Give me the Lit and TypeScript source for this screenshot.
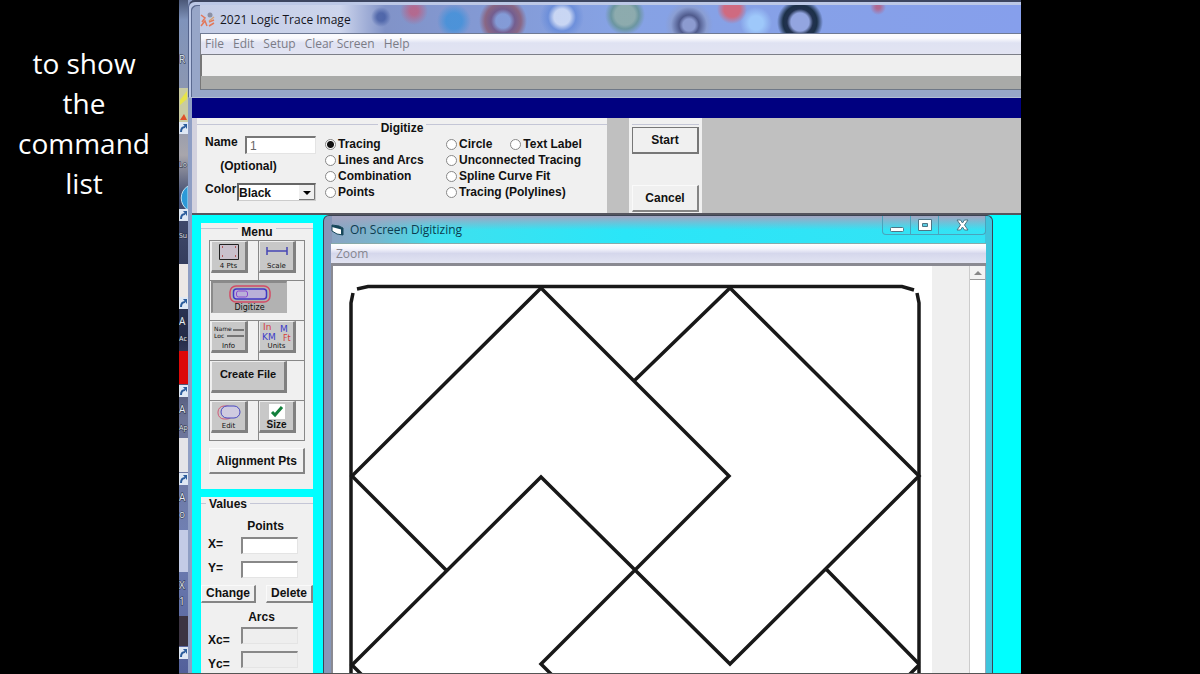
import { LitElement, html, css, svg } from "lit";
import { customElement } from "lit/decorators.js";

const base = css`
  *, *::before, *::after { box-sizing: border-box; }
  button, input, select { font: inherit; color: inherit; margin: 0; padding: 0; border-radius: 0; }
  fieldset { border: 0; margin: 0; padding: 0; min-width: 0; }
  legend { padding: 0; }
  .btn {
    background: #f0f0f0;
    border: 1px solid #fafafa;
    border-right: 2px solid #858585;
    border-bottom: 2px solid #858585;
    font-weight: bold;
    white-space: nowrap;
  }
  .legend {
    float: left; width: 100%; display: flex; align-items: flex-start; gap: 3px;
    height: 16px; line-height: 16px; font-weight: bold;
  }
  .legend::before, .legend::after { content: ""; height: 1px; background: #c4c6d6; margin-top: 4px; flex: 1; }
`;

@customElement("desktop-strip")
class DesktopStrip extends LitElement {
  static styles = css`
    :host { display: block; min-height: 0; overflow: hidden; border-right: 4px solid #8e9ec4; background: #65749b; }
    svg { display: block; width: 100%; height: 100%; }
  `;
  render() {
    const arrow = (y: number) => svg`
      <rect x="0" y=${y} width="9" height="12" fill="#dfe8f4"/>
      <path d=${`M2 ${y + 10} Q2 ${y + 5} 6 ${y + 5}`} stroke="#2b5c9c" stroke-width="2" fill="none"/>
      <path d=${`M4 ${y + 2}h4v5z`} fill="#2b5c9c"/>`;
    const label = (y: number, t: string) => svg`
      <text x="0" y=${y} fill="#e8edf5" stroke="#222a3c" stroke-width="1" paint-order="stroke" font-size=${t.length > 1 ? 7 : 10} font-family="Open Sans, sans-serif">${t}</text>`;
    return html`
      <svg viewBox="0 0 9 674" preserveAspectRatio="xMinYMin slice" aria-hidden="true">
        <defs><linearGradient id="d" x1="0" y1="0" x2="0" y2="1">
          <stop offset="0" stop-color="#4b5878"/><stop offset=".03" stop-color="#7f93bb"/>
          <stop offset=".17" stop-color="#9098ae"/><stop offset=".23" stop-color="#a8a6ac"/>
          <stop offset=".29" stop-color="#454f72"/><stop offset=".5" stop-color="#232a48"/>
          <stop offset=".62" stop-color="#6c7396"/><stop offset=".8" stop-color="#7080b4"/>
          <stop offset="1" stop-color="#53609a"/>
        </linearGradient></defs>
        <rect width="9" height="674" fill="url(#d)"/>
        <rect y="88" width="9" height="34" fill="#c9cba2"/><path d="M1 100l7-9v8l-7 6z" fill="#e6e34a"/>
        <path d="M1 120l4-6 3 6z" fill="#e0502a"/>
        <path d="M9 186a14 14 0 0 0 0 24z" fill="#2d9ad8" stroke="#bfe2f3"/>
        <rect y="264" width="9" height="34" fill="#ece8e6"/>
        <rect y="351" width="9" height="33" fill="#dd0808"/>
        <rect y="438" width="9" height="34" fill="#e4e4e8"/>
        <rect y="530" width="9" height="42" fill="#c3cbe6"/>
        <rect y="616" width="9" height="30" fill="#3c3442"/>
        ${[122, 209, 297, 385, 473, 647].map(arrow)}
        ${label(63, "R")}${label(167, "Lo")}${label(238, "Su")}${label(325, "A")}${label(341, "Ac")}
        ${label(413, "A")}${label(430, "Ap")}${label(501, "A")}${label(518, "o")}${label(589, "X")}${label(605, "1")}
      </svg>`;
  }
}

@customElement("title-window")
class TitleWindow extends LitElement {
  static styles = [base, css`
    :host { display: block; font: 12px/16px "Open Sans", "Noto Sans", sans-serif; background: #5b6a90; }
    .frame {
      position: relative; margin-left: -4px;
      background: #97a6c8; border-top: 2px solid #3c4560; padding: 3px 0 7px 11px;
      border-bottom: 1px solid #b4bfd4; border-left: 1px solid #55648c;
      box-shadow: inset 2px 3px 0 #bcc8e6, inset 3px 4px 0 #5b6a90;
      border-top-left-radius: 7px;
    }
    .title {
      height: 29px; display: flex; align-items: center; gap: 4px; color: #15151d; padding-top: 2px;
      border-bottom: 1px solid #6f7a94;
      background:
        radial-gradient(circle at 181px 12px, #39529cb0 4px, #0000 10px),
        radial-gradient(circle at 214px 6px, #d0506ca0 4px, #0000 14px),
        radial-gradient(circle at 254px 16px, #3490dcb0 8px, #0000 17px),
        radial-gradient(circle at 303px 16px, #0000 7px, #6e4a78c0 12px, #8c5060b0 18px, #0000 24px),
        radial-gradient(circle at 362px 12px, #dfe8fac0 8px, #5f86d8a0 14px, #0000 22px),
        radial-gradient(circle at 425px 10px, #8fae9cc0 10px, #5c8f78a0 14px, #0000 20px),
        radial-gradient(circle at 489px 20px, #8c9bd0 6px, #4f5a8c 10px, #8d9cc8a0 18px, #0000 24px),
        radial-gradient(circle at 532px 4px, #cf6a80 8px, #0000 15px),
        radial-gradient(circle at 556px 18px, #9ec8fa 7px, #0000 16px),
        radial-gradient(circle at 600px 17px, #93a5e0 9px, #223250 13px, #1c3048 17px, #0000 23px),
        radial-gradient(circle at 678px 2px, #b06890 2px, #0000 8px),
        linear-gradient(90deg, #c4cde6 0, #cdd5ec 140px, #8193c8 185px, #86a2e4 50%, #869fec);
    }
    .title svg { flex: none; }
    .menu {
      display: flex; gap: 9px; padding: 0 4px; height: 21px; align-items: center;
      background: linear-gradient(#fbfbfe 0 20%, #dfe2f2 45%, #e2e4f2);
      border-bottom: 1px solid #7c7f88; border-left: 1px solid #7c7f88;
    }
    .menu a { color: #7b7c86; text-decoration: none; }
    .field { display: block; width: 100%; height: 21px; border: 0; border-left: 2px solid #777; background: #efefef; }
    .band { height: 14px; background: #a9aaa8; border-bottom: 1px solid #6f7886; border-left: 1px solid #777; }
    .navy { height: 20px; background: #000080; }
  `];
  render() {
    return html`
      <div class="frame">
        <div class="title">
          <svg width="16" height="16" viewBox="0 0 16 16" fill="none" aria-hidden="true">
            <path d="M1 3l4 3-3 4M1 14l4-5 2 5M9 14l5-3M9 10l5-2" stroke="#e2785a" stroke-width="1.500"/>
            <circle cx="10" cy="3" r="2.500" fill="#8b90a4"/><path d="M14 5l-5 4" stroke="#d8a070" stroke-width="1.500"/>
          </svg>
          <span>2021 Logic Trace Image</span>
        </div>
        <nav class="menu">
          ${["File", "Edit", "Setup", "Clear Screen", "Help"].map((m) => html`<a href="#">${m}</a>`)}
        </nav>
        <input class="field" aria-label="Command" />
        <div class="band"></div>
      </div>
      <div class="navy"></div>`;
  }
}

@customElement("digitize-bar")
class DigitizeBar extends LitElement {
  static styles = [base, css`
    :host { display: block; font: 12px/16px "Liberation Sans", Arial, sans-serif; color: #111; }
    .bar { display: flex; gap: 22px; background: #c0c0c0; height: 97px; border-bottom: 2px solid #55555e; }
    .panel { flex: none; width: 415px; background: #f0f0f0; border-left: 5px solid #d3d2de; padding-top: 2px; }
    .body { clear: both; display: flex; gap: 9px; padding-left: 8px; font-weight: bold; }
    .ids { width: 111px; display: grid; grid-template-rows: 18px 29px 18px; }
    .line { display: flex; justify-content: space-between; line-height: 13px; }
    .name { width: 71px; height: 18px; background: #fff; border: 1px solid #e4e4e4; border-top: 2px solid #777; border-left: 2px solid #777; padding-left: 3px; font-weight: normal; color: #666; }
    .opt { text-align: center; line-height: 25px; padding-right: 24px; }
    .pick { position: relative; width: 79px; height: 18px; }
    .pick select { appearance: none; width: 100%; height: 18px; background: #fff; border: 1px solid #ccc; border-top: 2px solid #666; border-left: 2px solid #666; font-weight: bold; line-height: 14px; }
    .pick svg { position: absolute; right: 1px; top: 2px; pointer-events: none; }
    .radios { display: grid; grid-template-columns: 121px 1fr; grid-auto-rows: 16px; }
    .set { display: flex; gap: 18px; }
    .radio { display: flex; align-items: center; gap: 2px; white-space: nowrap; }
    .radio input { appearance: none; width: 11px; height: 11px; border-radius: 50%; border: 1px solid #888; background: #fff; }
    .radio input:checked { background: radial-gradient(circle, #111 0 3px, #fff 4px); }
    .cmds { flex: none; width: 73px; background: #f0f0f0; padding: 6px 3px 1px; display: flex; flex-direction: column; justify-content: space-between; align-items: stretch; }
    .cmds::before { content: ""; height: 1px; background: #c4c6d6; margin-bottom: 2px; }
    .cmds .btn { height: 27px; }
    .cmds .start { margin-bottom: auto; border: 1px solid #777; border-right-width: 2px; border-bottom-width: 2px; }
  `];
  radio(t: string, on = false) {
    return html`<label class="radio"><input type="radio" name="mode" ?checked=${on} />${t}</label>`;
  }
  render() {
    return html`
      <div class="bar">
        <fieldset class="panel">
          <legend class="legend">Digitize</legend>
          <div class="body">
            <div class="ids">
              <div class="line"><label for="n">Name</label><input class="name" id="n" value="1" /></div>
              <div class="opt">(Optional)</div>
              <div class="line"><label for="c">Color</label>
                <div class="pick"><select id="c"><option>Black</option></select>
                  <svg width="16" height="15" viewBox="0 0 16 15" aria-hidden="true"><path d="M0 0h16v15h-16z" fill="#f0f0f0"/><path d="M0 14.500h15.500V0" fill="none" stroke="#777"/><path d="M4 6h8l-4 4z" fill="#000"/></svg>
                </div>
              </div>
            </div>
            <div class="radios">
              ${this.radio("Tracing", true)}<div class="set">${this.radio("Circle")}${this.radio("Text Label")}</div>
              ${this.radio("Lines and Arcs")}${this.radio("Unconnected Tracing")}
              ${this.radio("Combination")}${this.radio("Spline Curve Fit")}
              ${this.radio("Points")}${this.radio("Tracing (Polylines)")}
            </div>
          </div>
        </fieldset>
        <div class="cmds"><button class="btn start">Start</button><button class="btn">Cancel</button></div>
      </div>`;
  }
}

@customElement("tool-menu")
class ToolMenu extends LitElement {
  static styles = [base, css`
    :host { display: block; font: 12px/16px "Liberation Sans", Arial, sans-serif; color: #111; }
    .stack { display: flex; flex-direction: column; gap: 8px; padding: 8px 10px 0 9px; }
    .panel { background: #f0f0f0; padding: 1px 0 15px; }
    .tools { clear: both; margin: 0 8px; display: grid; grid-template-columns: 48px 1fr; grid-auto-rows: 40px; border: 1px solid #888; border-top: 0; }
    .cell { border-top: 1px solid #888; padding: 0 1px; }
    .cell.r { border-left: 1px solid #888; padding-left: 0; }
    .wide { grid-column: span 2; }
    .tool { display: flex; flex-direction: column; align-items: center; justify-content: flex-end; width: 37px; height: 32px; background: #c8c8c8; border: 1px solid #eee; border-right: 3px solid #808080; border-bottom: 3px solid #808080; font: 7px/8px "DejaVu Sans", sans-serif; overflow: hidden; }
    .wide .tool { width: 76px; height: 32px; }
    .tool.down { background: #b2b2b2; border: 1px solid #b2b2b2; border-top: 2px solid #8a8a8a; border-left: 2px solid #8a8a8a; font: 8px/9px "DejaVu Sans", sans-serif; }
    .tool.text { justify-content: center; font: bold 11px/16px "Liberation Sans", sans-serif; padding-bottom: 4px; }
    .tool.size { font: bold 10px/11px "Liberation Sans", sans-serif; }
    .align { display: block; width: 96px; height: 26px; margin: 7px 8px 0; }
    .values { padding: 0 0 16px; }
    .values .legend { height: 14px; line-height: 14px; }
    .values .legend::before { flex: 0 0 5px; margin-top: 6px; }
    .values .legend::after { margin-top: 6px; }
    .grid { clear: both; display: grid; grid-template-columns: 33px 57px; grid-auto-rows: 24px; align-items: start; padding: 8px 7px 0; font-weight: bold; line-height: 14px; }
    .head { grid-column: 1 / -1; padding-left: 25px; text-align: center; }
    .grid input { height: 17px; width: 57px; background: #fff; border: 1px solid #e4e4e4; border-top: 2px solid #888; border-left: 2px solid #888; }
    .grid input:disabled { background: #eee; }
    .pair { display: flex; justify-content: space-between; }
    .pair .btn { height: 18px; line-height: 15px; padding: 0 4px; }
    .points { grid-template-rows: 18px; }
    .arcs { grid-template-rows: 17px; padding-top: 7px; }
    .arcs .head { padding-left: 17px; }
    .low { padding-top: 6px; }
  `];
  render() {
    return html`
      <div class="stack">
        <fieldset class="panel">
          <legend class="legend">Menu</legend>
          <div class="tools">
            <div class="cell"><button class="tool">
              <svg width="22" height="19" viewBox="0 0 22 19" fill="none"><path d="M1.500 1.500h19v15h-19z" stroke="#222" fill="#c9c0cc"/><path d="M4 4h1M17 4h1M4 13h1M17 13h1" stroke="#a33" stroke-width="1.500"/></svg>4 Pts</button></div>
            <div class="cell r"><button class="tool">
              <svg width="24" height="17" viewBox="0 0 24 17" fill="none"><path d="M2 6h20M2 2v8M22 2v8" stroke="#4646b4" stroke-width="1.500"/></svg>Scale</button></div>
            <div class="cell wide"><button class="tool down">
              <svg width="42" height="18" viewBox="0 0 42 18" fill="none"><rect x="1" y="1" width="40" height="16" rx="6" stroke="#d34a64" stroke-width="1.500"/><rect x="4.500" y="4" width="33" height="10" rx="3" stroke="#4038c4" stroke-width="1.500" fill="#b9b0d8"/><rect x="7.500" y="6" width="11" height="6" rx="2" stroke="#8b48d0"/></svg>Digitize</button></div>
            <div class="cell"><button class="tool">
              <svg width="32" height="17" viewBox="0 0 32 17"><g font-family="DejaVu Sans" font-size="6" fill="#111"><text x="1" y="6">Name</text><text x="1" y="13">Loc</text></g><path d="M20 5h11M14 11h17" stroke="#222"/></svg>Info</button></div>
            <div class="cell r"><button class="tool">
              <svg width="32" height="20" viewBox="0 0 32 20" font-family="DejaVu Sans" font-size="9"><g fill="#d43c3c"><text x="2" y="8">In</text><text x="22" y="19" font-size="8">Ft</text></g><g fill="#3c3cc8"><text x="19" y="10">M</text><text x="1" y="18">KM</text></g></svg>Units</button></div>
            <div class="cell wide"><button class="tool text">Create File</button></div>
            <div class="cell"><button class="tool">
              <svg width="26" height="18" viewBox="0 0 26 18" fill="none"><rect x="2" y="2" width="15" height="13" rx="6" stroke="#d05a78"/><rect x="5" y="2" width="19" height="12" rx="6" stroke="#4848c0" fill="#cfcbe0"/></svg>Edit</button></div>
            <div class="cell r"><button class="tool size">
              <svg width="16" height="15" viewBox="0 0 16 15"><path d="M0 0h16v15H0z" fill="#fff"/><path d="M3 8l3 3 7-8" fill="none" stroke="#12803c" stroke-width="3"/></svg>Size</button></div>
          </div>
          <button class="btn align">Alignment Pts</button>
        </fieldset>
        <fieldset class="panel values">
          <legend class="legend">Values</legend>
          <div class="grid points">
            <div class="head">Points</div>
            <label for="x">X=</label><input id="x" /><label for="y">Y=</label><input id="y" />
          </div>
          <div class="pair"><button class="btn">Change</button><button class="btn">Delete</button></div>
          <div class="grid arcs">
            <div class="head">Arcs</div>
            <label class="low" for="xc">Xc=</label><input id="xc" disabled /><label class="low" for="yc">Yc=</label><input id="yc" disabled />
          </div>
        </fieldset>
      </div>`;
  }
}

@customElement("trace-window")
class TraceWindow extends LitElement {
  static styles = [base, css`
    :host { display: flex; min-height: 0; min-width: 0; font: 12px/16px "Open Sans", "Noto Sans", sans-serif; }
    .win {
      flex: 1; min-width: 0; display: flex; flex-direction: column;
      border: 1px solid #3c4454; border-bottom: 0; border-top-left-radius: 6px; border-top-right-radius: 6px; padding: 0 6px 0 7px;
      background: linear-gradient(90deg, #8797b8 0 8px, #0000 8px calc(100% - 7px), #3fc4dc calc(100% - 7px)),
        linear-gradient(#a4a4c0 0, #6eb4d000 14px), linear-gradient(90deg, #8ca0c0 0, #79b4cc 50px, #3fe0ee 110px, #2ae6f8 300px, #35e2f4);
    }
    .title { height: 27px; display: flex; align-items: center; gap: 6px; color: #0d3c50; }
    .title svg { flex: none; }
    .title .name { flex: 1; }
    .ctl { align-self: flex-start; display: flex; border: 1px solid #4aa3bc; border-top: 0; border-radius: 0 0 4px 4px; }
    .ctl button { width: 28px; height: 18px; background: none; border: 0; border-right: 1px solid #4aa3bc; display: grid; place-items: center; }
    .ctl button:last-child { width: 46px; border-right: 0; }
    .menu { height: 20px; display: flex; align-items: center; padding-left: 5px; background: linear-gradient(#fff 0, #f4f4fc 25%, #d5d7ec 50%, #e2e4f2); border-top: 1px solid #8aa; }
    .menu a { color: #85858f; text-decoration: none; }
    .view { flex: 1; min-height: 0; display: grid; grid-template-columns: minmax(0, 1fr) 38px 16px; border-top: 3px solid #8a8a92; border-left: 2px solid #8a8a92; }
    .paper { background: #fff; min-height: 0; overflow: hidden; }
    .paper svg { display: block; width: 100%; }
    .gutter { background: #efefef; border-right: 1px solid #ccc; }
    .bar { background: #fff; border-right: 1px solid #9ab; }
    .bar button { display: grid; place-items: center; width: 100%; height: 14px; background: #f3f3f3; border: 0; border-bottom: 1px solid #999; }
  `];
  render() {
    return html`
      <section class="win">
        <header class="title">
          <svg width="13" height="12" viewBox="0 0 13 12"><path d="M1 1l7 1 4 2v7l-6-1-5-3z" fill="#fff" stroke="#17475a"/><path d="M1 1l7 1 4 2v2L1 3z" fill="#17475a"/><path d="M11 4v7" stroke="#17475a" stroke-width="2"/></svg>
          <span class="name">On Screen Digitizing</span>
          <div class="ctl">
            <button aria-label="Minimize"><svg width="14" height="16" viewBox="0 0 14 16"><rect x=".5" y="10.500" width="13" height="4" rx="1" fill="#fff" stroke="#4f7484"/></svg></button>
            <button aria-label="Maximize"><svg width="14" height="12" viewBox="0 0 14 12"><path d="M.5.500h13v11H.5zM4.500 4.500h5v3h-5z" fill="#fff" fill-rule="evenodd" stroke="#4f7484"/></svg></button>
            <button aria-label="Close"><svg width="13" height="12" viewBox="0 0 13 12"><path d="M1 1h3.500l2 3 2-3H12L8.500 6l3.500 5H8.500l-2-3-2 3H1l3.500-5z" fill="#fff" stroke="#4f7484"/></svg></button>
          </div>
        </header>
        <nav class="menu"><a href="#">Zoom</a></nav>
        <div class="view">
          <div class="paper">
            <svg viewBox="333 266 599 420" fill="none" stroke="#181818" stroke-width="3.500" role="img" aria-label="Traced pattern">
              <path d="M357 289L368 286.500H902L914 290M351 686V303L353 293M919 686V303L917 293"/>
              <path d="M446 570L352 476 541 288 729 476 541 664 563 686M635 380L730 288 919 476 730 664 541 477 352 665 373 686M827 570L919 664M919 665L898 686"/>
            </svg>
          </div>
          <div class="gutter"></div>
          <div class="bar"><button aria-label="Scroll up"><svg width="8" height="4" viewBox="0 0 8 4"><path d="M0 4l4-4 4 4z" fill="#888"/></svg></button></div>
        </div>
      </section>`;
  }
}

@customElement("app-root")
class AppRoot extends LitElement {
  static styles = css`
    :host { display: block; height: 100vh; overflow: hidden; background: #000; }
    .page { height: 100%; display: grid; grid-template-columns: 179px minmax(0, 1fr) 179px; }
    .caption { margin: 0; padding: 43px 26px 0 15px; color: #fff; text-align: center; font: 28px/40px "Open Sans", "Noto Sans", sans-serif; }
    .stage { display: grid; grid-template-columns: 13px minmax(0, 1fr); grid-template-rows: minmax(0, 1fr); min-height: 0; border-bottom: 1px solid #555; overflow: hidden; }
    .app { display: flex; flex-direction: column; min-height: 0; background: #00ffff; }
    .work { flex: 1; min-height: 0; display: grid; grid-template-columns: 131px minmax(0, 1fr); grid-template-rows: minmax(0, 1fr); padding-right: 28px; }
  `;
  render() {
    return html`
      <div class="page">
        <p class="caption">to show the command list</p>
        <main class="stage">
          <desktop-strip></desktop-strip>
          <div class="app">
            <title-window></title-window>
            <digitize-bar></digitize-bar>
            <div class="work"><tool-menu></tool-menu><trace-window></trace-window></div>
          </div>
        </main>
      </div>`;
  }
}
